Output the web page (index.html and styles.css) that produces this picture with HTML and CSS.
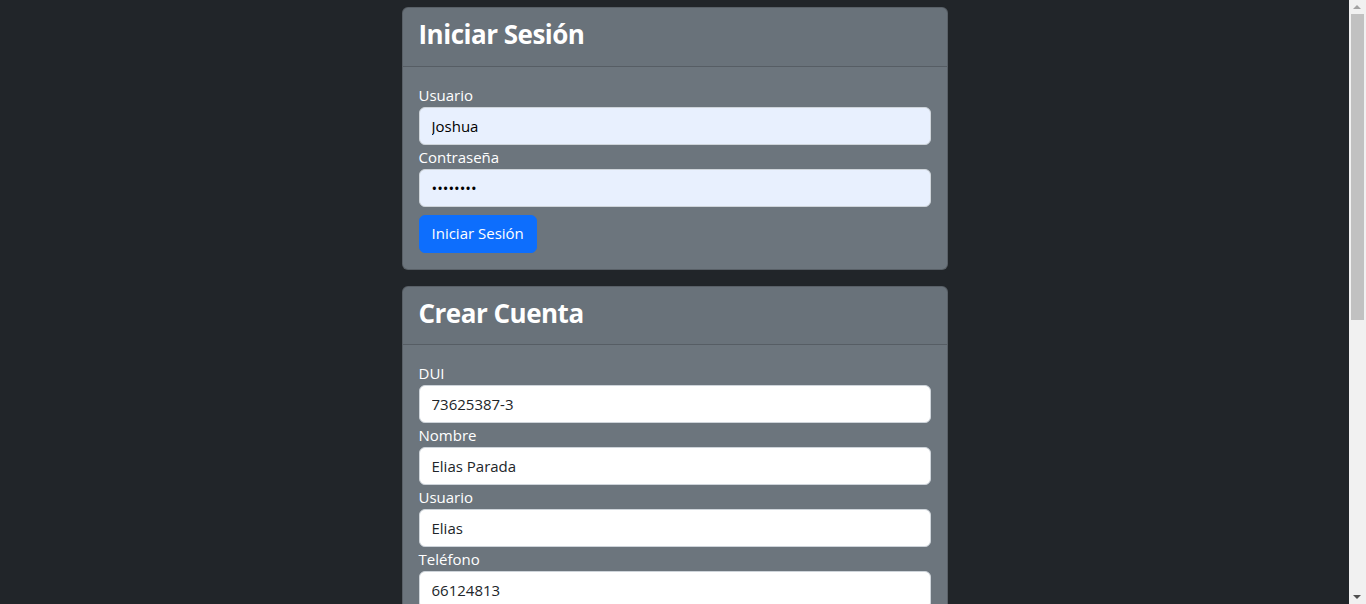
FILE: index.html
```html
<!DOCTYPE html>
<html lang="es">
<head>
<meta charset="utf-8">
<title>Login</title>
<link rel="stylesheet" href="styles.css">
</head>
<body>
<div class="container">
  <div class="col">
    <div class="card">
      <div class="card-header"><h3>Iniciar Sesión</h3></div>
      <div class="card-body">
        <label class="label">Usuario</label>
        <input class="input autofill" type="text" value="Joshua">
        <label class="label">Contraseña</label>
        <input class="input autofill" type="password" value="joshua12">
        <button class="btn">Iniciar Sesión</button>
      </div>
    </div>
    <div class="card card-gap">
      <div class="card-header"><h3>Crear Cuenta</h3></div>
      <div class="card-body">
        <label class="label">DUI</label>
        <input class="input" type="text" value="73625387-3">
        <label class="label">Nombre</label>
        <input class="input" type="text" value="Elias Parada">
        <label class="label">Usuario</label>
        <input class="input" type="text" value="Elias">
        <label class="label">Teléfono</label>
        <input class="input" type="text" value="66124813">
        <label class="label">Correo</label>
        <input class="input" type="text" value="elias@correo.com">
        <label class="label">Dirección</label>
        <input class="input" type="text" value="San Salvador">
        <label class="label">Contraseña</label>
        <input class="input" type="password" value="elias1234">
        <label class="label">Confirmar Contraseña</label>
        <input class="input" type="password" value="elias1234">
        <button class="btn">Crear Cuenta</button>
      </div>
    </div>
  </div>
</div>
<div class="scrollbar" aria-hidden="true">
  <div class="sb-arrow sb-up"></div>
  <div class="sb-thumb"></div>
  <div class="sb-arrow sb-down"></div>
</div>
</body>
</html>
```

FILE: styles.css
```css
html { overflow: hidden; }
body {
  margin: 0;
  padding-right: 17px;
  background: #212529;
  color: #fff;
  font-family: "Open Sans", "Noto Sans", sans-serif;
  font-size: 15px;
  line-height: 1.5;
}
.container {
  max-width: 1140px;
  margin: 0 auto;
  padding: 7px 12px 200px;
  display: flex;
  justify-content: center;
}
.col {
  width: 546px;
}
.card {
  background: #6c757d;
  border: 1px solid rgba(0,0,0,.175);
  border-radius: 6px;
}
.card-gap { margin-top: 16px; }
.card-header {
  padding: 8px 16px;
  background: rgba(33,37,41,.03);
  border-bottom: 1px solid rgba(0,0,0,.175);
}
.card-header h3 {
  margin: 0 0 6px;
  padding-top: 2px;
  font-size: 26px;
  font-weight: 700;
  letter-spacing: -0.5px;
  line-height: 33.6px;
  height: 33.6px;
}
.card-body {
  padding: 16px;
  display: flex;
  flex-direction: column;
  align-items: flex-start;
}
.label {
  display: block;
  line-height: 24px;
}
.input {
  box-sizing: border-box;
  width: 100%;
  height: 38px;
  padding: 6px 12px;
  font: inherit;
  color: #212529;
  background: #fff;
  border: 1px solid #ced4da;
  border-radius: 6px;
  outline: none;
}
.input.autofill { background: #e8f0fe; color: #000; }
.btn {
  margin-top: 8px;
  height: 38px;
  padding: 6px 12px;
  font: inherit;
  color: #fff;
  background: #0d6efd;
  border: 1px solid #0d6efd;
  border-radius: 6px;
}
.scrollbar {
  position: fixed;
  top: 0;
  right: 0;
  width: 17px;
  height: 100%;
  background: #f1f1f1;
}
.sb-thumb {
  position: absolute;
  left: 2px;
  top: 14px;
  width: 13px;
  height: 306px;
  background: #c1c1c1;
}
.sb-arrow {
  position: absolute;
  left: 4px;
  width: 0;
  height: 0;
  border-left: 4px solid transparent;
  border-right: 4px solid transparent;
}
.sb-up { top: 5px; border-bottom: 4px solid #a3a3a3; }
.sb-down { bottom: 5px; border-top: 4px solid #505050; }
```
